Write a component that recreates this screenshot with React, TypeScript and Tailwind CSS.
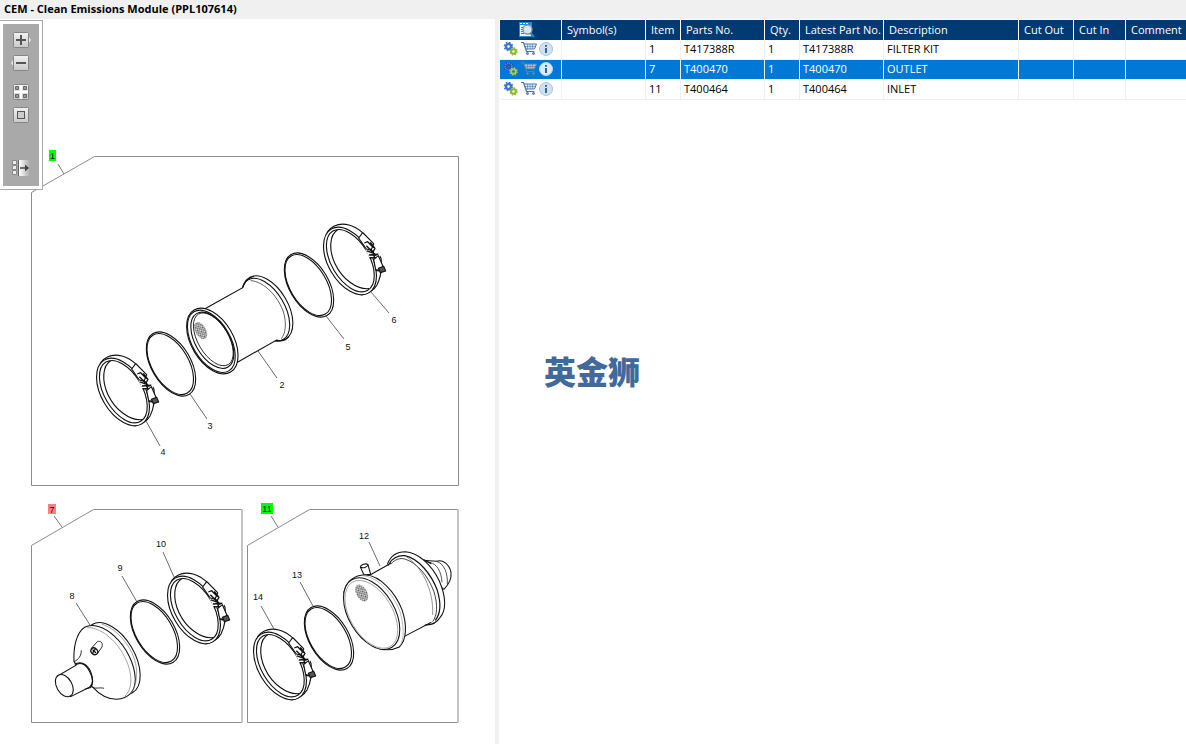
import { useState } from 'react';
import type { ReactNode } from 'react';

interface Part {
  item: number;
  partNo: string;
  qty: number;
  latest: string;
  description: string;
}

interface Callout {
  label: string;
  x: number;
  y: number;
  line: [number, number, number, number];
}

const parts: Part[] = [
  { item: 1, partNo: 'T417388R', qty: 1, latest: 'T417388R', description: 'FILTER KIT' },
  { item: 7, partNo: 'T400470', qty: 1, latest: 'T400470', description: 'OUTLET' },
  { item: 11, partNo: 'T400464', qty: 1, latest: 'T400464', description: 'INLET' },
];

const callouts: Callout[] = [
  { label: '2', x: 282, y: 388, line: [258, 351, 277, 378] },
  { label: '3', x: 210, y: 429, line: [190, 394, 207, 419] },
  { label: '4', x: 163, y: 455, line: [146, 421, 160, 446] },
  { label: '5', x: 348, y: 350, line: [326, 316, 344, 339] },
  { label: '6', x: 394, y: 323, line: [371, 292, 389, 313] },
  { label: '8', x: 72, y: 599, line: [76, 603, 90, 625] },
  { label: '9', x: 120, y: 571, line: [122, 576, 137, 602] },
  { label: '10', x: 161, y: 547, line: [163, 552, 174, 577] },
  { label: '12', x: 364, y: 539, line: [369, 542, 380, 566] },
  { label: '13', x: 297, y: 578, line: [300, 582, 313, 606] },
  { label: '14', x: 258, y: 600, line: [261, 606, 274, 629] },
];

const hotspots = [
  { label: '1', x: 49, y: 150, width: 7, height: 11, fill: '#00ff00', line: [58, 164, 64, 174] },
  { label: '7', x: 48, y: 504, width: 8, height: 10, fill: '#ff8080', line: [54, 516, 62, 527] },
  { label: '11', x: 261, y: 503, width: 12, height: 11, fill: '#00ff00', line: [271, 516, 278, 527] },
];

const headCell = 'border-r border-white pl-[5px] text-left font-normal whitespace-nowrap';
const bodyCell = 'border-r border-b border-[#f0f0f0] pt-0 pb-px pl-[3px] whitespace-nowrap';

function Gasket({ x, y }: { x: number; y: number }) {
  return (
    <g transform={`translate(${x} ${y}) scale(.3333)`} fill="none" stroke="#111" strokeWidth="3.3">
      <ellipse rx="106" ry="59" transform="rotate(59.5)" />
      <ellipse cx="-1" cy="2" rx="101" ry="55" transform="rotate(59.5)" />
    </g>
  );
}

function Clamp({ x, y }: { x: number; y: number }) {
  return (
    <g transform={`translate(${x} ${y}) scale(.3333)`} fill="none" stroke="#111" strokeWidth="3.4" strokeLinejoin="round">
      {/* band */}
      <path
        fill="#fff"
        d="M62 128C78 108 102 102 126 108C142 112 158 123 170 134L200 166L222 208C226 240 220 268 210 288C202 302 190 312 165 317Z"
      />
      <ellipse cx="129" cy="216" rx="111" ry="65" transform="rotate(59.5 129 216)" fill="#fff" />
      <ellipse cx="130" cy="215" rx="103" ry="57" transform="rotate(59.5 130 215)" />
      <path d="M92 122C68 136 64 182 84 224C106 270 148 302 186 299" />
      {/* latch and bolt */}
      <path stroke="none" fill="#fff" d="M172 172L198 158L222 196L210 214L186 204Z" />
      <path fill="#fff" d="M155 147L167 131L200 164L192 184L178 180Z" />
      <path strokeWidth="4" d="M172 162L182 158L200 176M178 170L196 188M190 160L204 178L196 192L180 186" />
      <path strokeWidth="4.5" d="M190 180L208 200M186 198L214 196M188 206L212 207M198 186L204 212" />
      <path fill="#fff" d="M200 212L214 200L228 232L216 244L206 242Z" />
      <path fill="#555" d="M214 238L230 232L236 246L220 251Z" />
      <path d="M206 244L216 246" />
    </g>
  );
}

function FilterCylinder() {
  return (
    <g transform="translate(180 210) scale(.3333)" fill="none" stroke="#111" strokeWidth="3.3">
      <ellipse cx="263" cy="295" rx="107" ry="61" transform="rotate(59.5 263 295)" fill="#fff" />
      <ellipse cx="257" cy="299" rx="104" ry="57" transform="rotate(59.5 257 299)" />
      <path stroke="none" fill="#fff" d="M75 296L188 233L212 219C252 222 292 258 306 305C315 340 310 370 290 390L170 458Z" />
      <path d="M75 296L188 233C194 214 206 203 222 199M170 458L290 390C304 394 318 391 326 380" />
      <path strokeWidth="2" d="M212 212C252 214 298 262 312 312C320 345 316 370 304 386" />
      <ellipse cx="97" cy="393" rx="108" ry="63" transform="rotate(59.5 97 393)" fill="#fff" />
      <ellipse cx="94" cy="394" rx="103" ry="57" transform="rotate(59.5 94 394)" />
      <ellipse cx="97" cy="391" rx="93" ry="51" transform="rotate(59.5 97 391)" />
      <ellipse cx="100" cy="388" rx="88" ry="46" transform="rotate(59.5 100 388)" strokeWidth="2.4" />
      <ellipse cx="62" cy="362" rx="28" ry="16" transform="rotate(60 62 362)" fill="url(#mesh)" stroke="none" />
    </g>
  );
}

function OutletCone() {
  return (
    <g transform="translate(20 495) scale(.3333)" fill="none" stroke="#111" strokeWidth="3.2">
      <ellipse cx="277" cy="491" rx="119" ry="67" transform="rotate(59.5 277 491)" fill="#fff" />
      <path
        fill="#fff"
        d="M162 500C160 458 168 414 194 397C216 384 252 394 284 424C320 458 344 506 346 552C346 588 326 610 290 613C262 613 234 594 216 574Z"
      />
      <path strokeWidth="2" stroke="#777" d="M202 398C238 396 286 432 312 482C338 530 340 582 314 604M246 388C294 402 348 466 350 530C350 560 344 582 332 596" />
      <path d="M162 500C176 494 184 482 184 466M214 574C224 584 238 576 252 580" strokeWidth="2.6" />
      {/* pipe stub */}
      <path fill="#fff" d="M113 543L166 512C176 500 196 504 208 528C220 550 220 568 208 577L152 605Z" />
      <path d="M164 508C182 496 202 508 212 530C220 550 220 566 212 578L196 582" />
      <ellipse cx="133" cy="572" rx="36" ry="23" transform="rotate(60 133 572)" fill="#fff" />
      {/* sensor boss */}
      <path strokeWidth="2.6" fill="#fff" d="M214 460L232 440C242 436 250 444 246 456L232 476Z" />
      <ellipse cx="223" cy="469" rx="11" ry="9" transform="rotate(40 223 469)" fill="#fff" strokeWidth="4" />
      <path strokeWidth="4" d="M218 464L228 474M226 462L218 474" />
    </g>
  );
}

function InletCanister() {
  return (
    <g transform="translate(240 495) scale(.3333)" fill="none" stroke="#111" strokeWidth="3.2">
      {/* outlet pipe */}
      <path fill="#fff" d="M546 196L590 199C608 192 628 208 633 232C636 254 626 268 612 283L570 250Z" />
      <path strokeWidth="2.2" d="M570 203C590 206 604 228 606 262M590 199C612 206 624 234 622 268" />
      <path strokeWidth="4.5" d="M550 194L574 206" />
      {/* rear flange */}
      <path
        fill="#fff"
        d="M443 206C452 182 472 170 496 170C534 172 576 210 598 258C618 304 620 346 600 368C588 386 572 392 552 389Z"
      />
      <path strokeWidth="3.6" d="M448 206C456 190 474 180 494 182C536 190 574 238 592 286C604 326 602 356 586 376" />
      <path strokeWidth="2.4" d="M454 206C464 194 480 188 494 192C530 202 564 242 582 290C594 330 592 362 578 380" />
      <path stroke="none" fill="#fff" d="M390 240L456 206C520 190 590 300 574 378L492 425Z" />
      <path strokeWidth="2.4" stroke="#777" d="M500 186C542 212 582 282 578 360" />
      <path d="M390 240L454 204M492 425L574 382" />
      {/* sensor port */}
      <path fill="#fff" d="M372 240L361 216C362 208 378 204 384 209L392 238Z" />
      <path d="M361 216C370 222 382 216 384 209" />
      {/* front flange and face */}
      <path
        fill="#fff"
        d="M312 292C318 258 346 238 378 240C420 242 466 292 486 344C502 390 500 436 478 456C462 464 440 466 420 462Z"
      />
      <path strokeWidth="2" stroke="#999" d="M368 242C414 246 460 296 480 350C492 392 494 430 480 452" />
      <ellipse cx="395" cy="356" rx="118" ry="69" transform="rotate(59.5 395 356)" fill="#fff" />
      <ellipse cx="394" cy="358" rx="112" ry="64" transform="rotate(59.5 394 358)" strokeWidth="2" stroke="#888" />
      <ellipse cx="365" cy="294" rx="28" ry="16" transform="rotate(60 365 294)" fill="url(#mesh)" stroke="none" />
    </g>
  );
}

function ExplodedView() {
  return (
    <svg viewBox="0 19 495 725" className="block w-full" role="img" aria-label="Exploded view of the emissions module">
      <defs>
        <pattern id="mesh" width="9" height="9" patternUnits="userSpaceOnUse">
          <path d="M0 2H5M4 6.500H9M0 6.500H1" stroke="#222" strokeWidth="3" />
          <path d="M0 2L4 6.500M5 2L9 6.500" stroke="#888" strokeWidth="1.500" />
        </pattern>
      </defs>
      <g fill="none" stroke="#8c8c8c">
        <path d="M31.500 485.500V192.500L94.500 156.500H458.500V485.500Z" />
        <path d="M242 722.500H31.500V545.500L93.500 509.500H242" />
        <path d="M458 722.500H247.500V545.500L309.500 509.500H458" />
        <path stroke="#c4c4c4" strokeWidth="2" d="M242 509V723M458 509V723" />
      </g>

      <Clamp x={80} y={320} />
      <Gasket x={171} y={364} />
      <FilterCylinder />
      <Gasket x={309} y={285} />
      <Clamp x={307} y={189} />
      <OutletCone />
      <Gasket x={155} y={632} />
      <Clamp x={151} y={538} />
      <Clamp x={237} y={594} />
      <Gasket x={329} y={638} />
      <InletCanister />

      <g fontFamily="'Liberation Sans', Arial, sans-serif" fontSize="9" textAnchor="middle" fill="#111">
        {callouts.map(({ label, x, y, line }) => (
          <g key={label}>
            <line x1={line[0]} y1={line[1]} x2={line[2]} y2={line[3]} stroke="#444" strokeWidth=".8" />
            <text x={x} y={y}>{label}</text>
          </g>
        ))}
        {hotspots.map(({ label, x, y, width, height, fill, line }) => (
          <g key={label}>
            <line x1={line[0]} y1={line[1]} x2={line[2]} y2={line[3]} stroke="#555" strokeWidth=".8" />
            <rect x={x} y={y} width={width} height={height} fill={fill} />
            <text x={x + width / 2} y={y + 9}>{label}</text>
          </g>
        ))}
      </g>
    </svg>
  );
}

function ToolButton({ label, children }: { label: string; children: ReactNode }) {
  return (
    <button type="button" aria-label={label} title={label} className="block h-4 w-5">
      <svg viewBox="0 0 20 16" className="h-4 w-5">
        {children}
      </svg>
    </button>
  );
}

function ToolFace() {
  return <rect x="2.500" y=".5" width="15" height="15" rx="1" fill="url(#face)" stroke="#858585" />;
}

function Toolbar() {
  return (
    <div role="toolbar" aria-label="Diagram tools" className="absolute top-px left-0 border-y border-r border-[#a9a9a9] bg-white p-[3px]">
      <svg className="absolute h-0 w-0" aria-hidden="true">
        <defs>
          <linearGradient id="face" x2="0" y2="1">
            <stop stopColor="#f2f2f2" />
            <stop offset="1" stopColor="#c9c9c9" />
          </linearGradient>
          <linearGradient id="fade">
            <stop stopColor="#fff" />
            <stop offset="1" stopColor="#aaa" />
          </linearGradient>
        </defs>
      </svg>
      <div className="flex flex-col items-center bg-[#a9a9a9] px-2 pt-2 pb-2.5">
        <div className="flex flex-col gap-[7px]">
          <ToolButton label="Zoom in">
            <path d="M17.500 5L19.500 8L17.500 11" fill="#e4e4e4" stroke="#e4e4e4" />
            <ToolFace />
            <path d="M5 8H15M10 3V13" stroke="#555" strokeWidth="2" />
          </ToolButton>
          <ToolButton label="Zoom out">
            <path d="M2.500 5L.500 8L2.500 11" fill="#e4e4e4" stroke="#e4e4e4" />
            <ToolFace />
            <path d="M5 8H15" stroke="#555" strokeWidth="2" />
          </ToolButton>
        </div>
        <div className="mt-[13px] flex flex-col gap-[7px]">
          <ToolButton label="Fit to window">
            <ToolFace />
            <path d="M10 1V15M3 8H17" stroke="#fff" strokeWidth="2" />
            <path d="M4.500 2.500h3v3h-3zM12.500 2.500h3v3h-3zM4.500 10.500h3v3h-3zM12.500 10.500h3v3h-3z" fill="#999" stroke="#666" />
          </ToolButton>
          <ToolButton label="Actual size">
            <ToolFace />
            <rect x="6.500" y="4.500" width="7" height="7" fill="#ccc" stroke="#555" />
          </ToolButton>
        </div>
        <div className="mt-[37px]">
          <ToolButton label="Hide parts list">
            <rect x="8" width="11" height="16" fill="url(#fade)" />
            <path d="M1.500 .5h4v4h-4zM1.500 5.500h4v4h-4zM1.500 10.500h4v4h-4z" fill="#eee" stroke="#888" />
            <path d="M7.500 0V16" stroke="#666" />
            <path d="M9 8H16" stroke="#444" strokeWidth="1.500" />
            <path d="M14 4.500L18 8L14 11.500Z" fill="#444" />
          </ToolButton>
        </div>
      </div>
    </div>
  );
}

function SearchListIcon() {
  return (
    <svg viewBox="0 0 16 16" className="h-4 w-4">
      <path d="M0 0H13V15H0Z" fill="#2389c9" />
      <path d="M1 3H12V14H1Z" fill="#e8f3fa" />
      <path d="M1 1.500H3M4 1.500H6M7 1.500H9" stroke="#fff" />
      <path d="M2 5.500H4M2 7.500H4M2 9.500H4M2 11.500H5" stroke="#2389c9" />
      <circle cx="8.500" cy="7.500" r="4.500" fill="#dce6ec" stroke="#7f97a6" strokeWidth="1.300" />
      <path d="M11.500 11L15 15" stroke="#2f80b8" strokeWidth="2.200" />
    </svg>
  );
}

function GearsIcon({ selected }: { selected: boolean }) {
  const blue = selected ? '#2a4fae' : '#3f78d0';
  const green = selected ? '#a4c95c' : '#8cb832';
  return (
    <svg viewBox="0 0 16 16" className="h-4 w-4">
      <circle cx="5.500" cy="5.500" r="2.500" fill="none" stroke={blue} strokeWidth="2.400" />
      <circle cx="5.500" cy="5.500" r="4" fill="none" stroke={blue} strokeWidth="1.600" strokeDasharray="1.600 1.540" />
      {selected && <circle cx="5.500" cy="5.500" r="3.400" fill="none" stroke="#8fbcf0" strokeWidth="1" strokeDasharray="1 1" />}
      <circle cx="10.500" cy="10.500" r="2.300" fill="none" stroke={green} strokeWidth="2" />
      <circle cx="10.500" cy="10.500" r="3.500" fill="none" stroke={green} strokeWidth="1.500" strokeDasharray="1.400 1.350" />
    </svg>
  );
}

function CartIcon({ selected }: { selected: boolean }) {
  return (
    <svg viewBox="0 0 16 16" className="h-4 w-4" fill="none" stroke={selected ? '#5b7ea0' : '#4a78ae'}>
      <path d="M0 1.500H2.500L5.500 10.500H13.500" strokeWidth="1.200" />
      <path d="M3 3H15.500L13.500 8H5Z" fill={selected ? '#a3c6e2' : '#e3ebf5'} />
      <path d="M4 5.500H15M6.500 3V8M9 3V8M11.500 3V8" strokeWidth=".6" />
      <circle cx="6.500" cy="12.500" r="1" fill="#6d8fb5" />
      <circle cx="12.500" cy="12.500" r="1" fill="#6d8fb5" />
    </svg>
  );
}

function InfoIcon({ selected }: { selected: boolean }) {
  return (
    <svg viewBox="0 0 14 14" className="h-3.5 w-3.5">
      <circle cx="7" cy="7" r="6.500" fill={selected ? '#d9ebfa' : '#cfe1f2'} stroke={selected ? '#b4d5f1' : '#a9c5de'} />
      <path d="M7 3V4.800M7 6V11" stroke="#37658f" strokeWidth="2" />
    </svg>
  );
}

function PartsTable() {
  const [selectedItem, setSelectedItem] = useState(7);

  return (
    <table className="w-full table-fixed border-separate border-spacing-0 text-[11px] leading-4">
      <colgroup>
        <col className="w-[62px]" />
        <col className="w-[84px]" />
        <col className="w-[35px]" />
        <col className="w-[84px]" />
        <col className="w-[35px]" />
        <col className="w-[84px]" />
        <col className="w-[135px]" />
        <col className="w-[55px]" />
        <col className="w-[52px]" />
        <col />
      </colgroup>
      <thead>
        <tr className="h-5 bg-[#003a73] text-white">
          <th scope="col" className="border-r border-white p-0 pr-2">
            <button type="button" aria-label="Search parts" className="mx-auto block h-4 w-4">
              <SearchListIcon />
            </button>
          </th>
          <th scope="col" className={headCell}>Symbol(s)</th>
          <th scope="col" className={headCell}>Item</th>
          <th scope="col" className={headCell}>Parts No.</th>
          <th scope="col" className={headCell}>Qty.</th>
          <th scope="col" className={headCell}>Latest Part No.</th>
          <th scope="col" className={headCell}>Description</th>
          <th scope="col" className={headCell}>Cut Out</th>
          <th scope="col" className={headCell}>Cut In</th>
          <th scope="col" className="pl-[5px] text-left font-normal whitespace-nowrap">Comment</th>
        </tr>
      </thead>
      <tbody>
        {parts.map((part) => {
          const selected = part.item === selectedItem;
          return (
            <tr
              key={part.item}
              onClick={() => setSelectedItem(part.item)}
              aria-selected={selected}
              className={selected ? 'h-5 bg-[#0078d7] text-white' : 'h-5 bg-white text-black'}
            >
              <td className="border-r border-b border-[#f0f0f0] pt-0 pr-0 pb-px pl-[3px]">
                <div className="flex items-center gap-0.5">
                  <button type="button" aria-label={`Options for ${part.partNo}`}>
                    <GearsIcon selected={selected} />
                  </button>
                  <button type="button" aria-label={`Add ${part.partNo} to cart`}>
                    <CartIcon selected={selected} />
                  </button>
                  <button type="button" aria-label={`Details of ${part.partNo}`}>
                    <InfoIcon selected={selected} />
                  </button>
                </div>
              </td>
              <td className={bodyCell} />
              <td className={bodyCell}>{part.item}</td>
              <td className={bodyCell}>{part.partNo}</td>
              <td className={bodyCell}>{part.qty}</td>
              <td className={bodyCell}>{part.latest}</td>
              <td className={bodyCell}>{part.description}</td>
              <td className={bodyCell} />
              <td className={bodyCell} />
              <td className="border-b border-[#f0f0f0]" />
            </tr>
          );
        })}
      </tbody>
    </table>
  );
}

export default function App() {
  return (
    <div className="flex min-h-screen flex-col bg-white font-['Open_Sans','Noto_Sans_CJK_SC',sans-serif]">
      <header className="bg-[#f0f0f0] px-1 pt-px pb-0.5">
        <h1 className="text-[11px] leading-4 font-bold text-black">CEM - Clean Emissions Module (PPL107614)</h1>
      </header>
      <main className="grid flex-1 grid-cols-[495fr_4px_687fr]">
        <section aria-label="Diagram" className="relative">
          <ExplodedView />
          <Toolbar />
        </section>
        <div className="bg-[#f0f0f0]" />
        <section aria-label="Parts list" className="min-w-0 overflow-hidden pt-px pl-px">
          <PartsTable />
          <p className="mt-[252px] ml-11 text-[32px] leading-10 font-black text-[#41699a]">英金狮</p>
        </section>
      </main>
    </div>
  );
}
